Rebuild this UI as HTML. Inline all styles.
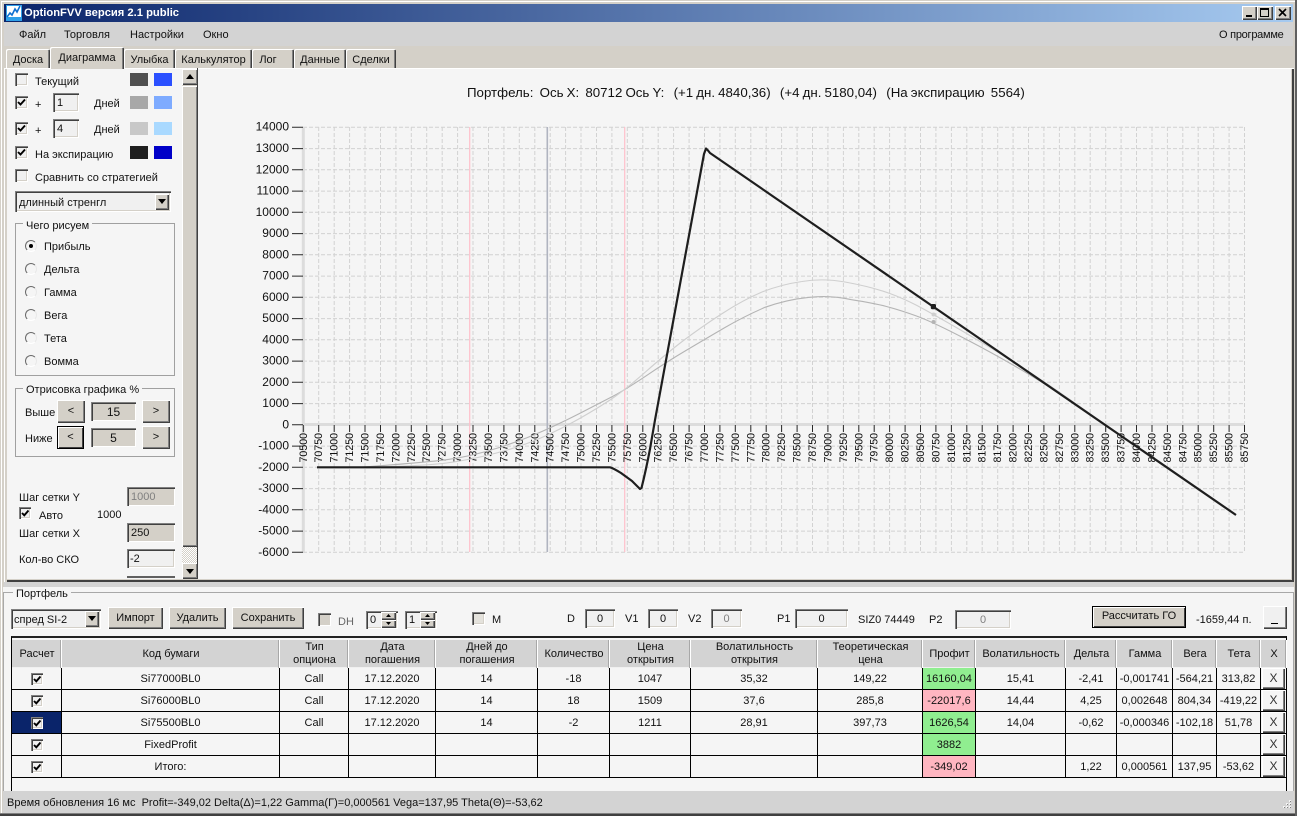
<!DOCTYPE html>
<html><head><meta charset="utf-8"><title>OptionFVV</title>
<style>
html,body{margin:0;padding:0}
body{width:1297px;height:816px;position:relative;overflow:hidden;background:#d4d0c8;font:11px "Liberation Sans",sans-serif;color:#111}
.a,.t,.r,.s,.cb,.rd,.in{position:absolute;box-sizing:border-box}
.t{white-space:pre;line-height:14px;height:14px;margin-top:1px}
.r{background:#d4d0c8;box-shadow:inset 1px 1px #fff,inset -1px -1px #404040,inset -2px -2px #808080;text-align:center}
.s{box-shadow:inset 1px 1px #808080,inset 2px 2px #404040,inset -1px -1px #fff,inset -2px -2px #d4d0c8;background:#f0f0f0}
.in{box-shadow:inset 1px 1px #808080,inset 2px 2px #404040,inset -1px -1px #fff,inset -2px -2px #d4d0c8;background:#f0f0f0;text-align:center;line-height:21px}
.cb{width:13px;height:13px;box-shadow:inset 1px 1px #808080,inset 2px 2px #404040,inset -1px -1px #fff,inset -2px -2px #d4d0c8;background:#f0f0f0}
.cb svg{position:absolute;left:0;top:0}
.rd{width:12px;height:12px;border-radius:50%;background:#f5f5f5;border:1.5px solid;border-color:#6a6a6a #e8e8e8 #fff #6a6a6a}
.tab{position:absolute;box-sizing:border-box;top:49px;height:19px;background:#d4d0c8;text-align:center;line-height:22px;font-size:11px;box-shadow:inset 1px 1px #fff,inset -1px 0 #404040,inset -2px 0 #808080;border-radius:2px 2px 0 0}
.gb{position:absolute;box-sizing:border-box;border:1px solid #a0a0a0}
.gt{position:absolute;background:#f5f5f5;padding:0 3px;line-height:13px;white-space:pre}
table{position:absolute;left:12px;top:640px;border-collapse:separate;border-spacing:0;table-layout:fixed;width:1275px;font-size:11px}
th{font-weight:normal;background:#d3d3d3;height:28px;padding:0;line-height:13px;box-shadow:inset -1px 0 #fff,inset -2px 0 #a8a8a8,inset 0 -1px #f0f0f0;text-align:center}
td{height:21px;padding:0;text-align:center;border-right:1px solid #000;border-bottom:1px solid #000;background:#f5f5f5;position:relative;white-space:nowrap}
td .cb{left:19px;top:5px;width:12px;height:12px}
td .r{left:1px;top:0;width:23px;height:21px;line-height:20px;font-size:12px;color:#333;position:absolute;background:#f5f5f5}
.g{background:#90ee90}.p{background:#ffb6c1}
.sel{background:#0a246a}
</style></head><body>
<!-- frame -->
<div class="a" style="left:0;top:0;width:1297px;height:816px;background:#d4d0c8;box-shadow:inset 1px 1px #d4d0c8,inset 2px 2px #fff,inset -1px -1px #404040,inset -2px -2px #808080"></div>
<!-- title bar -->
<div class="a" style="left:4px;top:4px;width:1289px;height:18px;background:linear-gradient(90deg,#0a246a,#a6caf0)"></div>
<svg class="a" style="left:6px;top:5px" width="16" height="16" viewBox="0 0 16 16"><rect width="16" height="16" fill="#2f9fe8"/><rect x="1" y="1" width="14" height="11" fill="#fff"/><path d="M1 12l3-4 2 2 3-6 2 3 3-6" fill="none" stroke="#1070d0" stroke-width="1.6"/></svg>
<div class="t" style="left:24px;top:5px;color:#fff;font-weight:bold;font-size:11.2px">OptionFVV версия 2.1 public</div>
<div class="r" style="left:1242px;top:6px;width:15px;height:14px"><div class="a" style="left:4px;top:9px;width:6px;height:2px;background:#000"></div></div>
<div class="r" style="left:1257px;top:6px;width:16px;height:14px"><div class="a" style="left:3px;top:2px;width:9px;height:9px;border:1px solid #000;border-top-width:2px;box-sizing:border-box"></div></div>
<div class="r" style="left:1275px;top:6px;width:16px;height:14px"><svg class="a" style="left:3px;top:2px" width="10" height="9"><path d="M1 1l7 7M8 1L1 8" stroke="#000" stroke-width="1.6"/></svg></div>
<!-- menu -->
<div class="a" style="left:4px;top:22px;width:1289px;height:24px;background:#d3d3d3"></div>
<div class="t" style="left:19px;top:27px">Файл</div>
<div class="t" style="left:64px;top:27px">Торговля</div>
<div class="t" style="left:130px;top:27px">Настройки</div>
<div class="t" style="left:203px;top:27px">Окно</div>
<div class="t" style="left:1219px;top:27px;letter-spacing:-0.25px">О программе</div>
<!-- tabs -->
<div class="tab" style="left:6px;width:44px">Доска</div>
<div class="tab" style="left:124px;width:51px">Улыбка</div>
<div class="tab" style="left:175px;width:77px">Калькулятор</div>
<div class="tab" style="left:252px;width:42px;padding-right:10px">Лог</div>
<div class="tab" style="left:294px;width:52px">Данные</div>
<div class="tab" style="left:346px;width:50px">Сделки</div>
<!-- main panel -->
<div class="a" style="left:4px;top:68px;width:1290px;height:514px;background:#f5f5f5;box-shadow:inset 1px 1px #fff,inset 3px 0 #d4d0c8,inset -1px -1px #404040,inset -2px -2px #404040,inset -3px -3px #d4d0c8,inset 0 1px #fff"></div>
<div class="tab" style="left:50px;top:47px;width:74px;height:22px;z-index:2;line-height:22px">Диаграмма</div>
<!-- left column -->
<div class="cb" style="left:15px;top:73px"></div>
<div class="t" style="left:35px;top:74px">Текущий</div>
<div class="a" style="left:130px;top:73px;width:18px;height:13px;background:#505050"></div>
<div class="a" style="left:154px;top:73px;width:18px;height:13px;background:#2b50ff"></div>

<div class="cb" style="left:15px;top:96px"><svg width="13" height="13"><path d="M3 6l2.5 2.5L10 3.5" fill="none" stroke="#000" stroke-width="1.9"/></svg></div>
<div class="t" style="left:35px;top:97px">+</div>
<div class="in" style="left:53px;top:93px;width:26px;height:19px;text-align:left;padding-left:4px">1</div>
<div class="t" style="left:94px;top:96px">Дней</div>
<div class="a" style="left:130px;top:96px;width:18px;height:13px;background:#a8a8a8"></div>
<div class="a" style="left:154px;top:96px;width:18px;height:13px;background:#7eabff"></div>

<div class="cb" style="left:15px;top:122px"><svg width="13" height="13"><path d="M3 6l2.5 2.5L10 3.5" fill="none" stroke="#000" stroke-width="1.9"/></svg></div>
<div class="t" style="left:35px;top:123px">+</div>
<div class="in" style="left:53px;top:119px;width:26px;height:19px;text-align:left;padding-left:4px">4</div>
<div class="t" style="left:94px;top:122px">Дней</div>
<div class="a" style="left:130px;top:122px;width:18px;height:13px;background:#c8c8c8"></div>
<div class="a" style="left:154px;top:122px;width:18px;height:13px;background:#a9d9ff"></div>

<div class="cb" style="left:15px;top:146px"><svg width="13" height="13"><path d="M3 6l2.5 2.5L10 3.5" fill="none" stroke="#000" stroke-width="1.9"/></svg></div>
<div class="t" style="left:35px;top:147px">На экспирацию</div>
<div class="a" style="left:130px;top:146px;width:18px;height:13px;background:#1e1e1e"></div>
<div class="a" style="left:154px;top:146px;width:18px;height:13px;background:#0000c8"></div>

<div class="cb" style="left:15px;top:169px"></div>
<div class="t" style="left:35px;top:170px">Сравнить со стратегией</div>

<div class="s" style="left:15px;top:191px;width:156px;height:21px"></div>
<div class="t" style="left:19px;top:195px">длинный стренгл</div>
<div class="r" style="left:155px;top:194px;width:14px;height:16px"><svg class="a" style="left:3px;top:5px" width="8" height="5"><path d="M0 0h8L4 5z" fill="#000"/></svg></div>

<!-- scrollbar -->
<div class="a" style="left:182px;top:69px;width:16px;height:510px;background:#d4d0c8"></div>
<div class="r" style="left:182px;top:69px;width:16px;height:16px"><svg class="a" style="left:4px;top:5px" width="8" height="5"><path d="M0 5h8L4 0z" fill="#000"/></svg></div>
<div class="r" style="left:182px;top:86px;width:16px;height:461px"></div>
<div class="a" style="left:182px;top:547px;width:16px;height:16px;background:repeating-conic-gradient(#fff 0 25%,#d4d0c8 0 50%) 0 0/2px 2px"></div>
<div class="r" style="left:182px;top:563px;width:16px;height:16px"><svg class="a" style="left:4px;top:6px" width="8" height="5"><path d="M0 0h8L4 5z" fill="#000"/></svg></div>
<div class="a" style="left:197px;top:68px;width:1px;height:511px;background:#404040"></div>

<!-- group 1 -->
<div class="gb" style="left:15px;top:223px;width:160px;height:153px"></div>
<div class="gt" style="left:23px;top:220px">Чего рисуем</div>
<div class="rd" style="left:25px;top:240px"><div class="a" style="left:3px;top:3px;width:4px;height:4px;border-radius:50%;background:#000"></div></div>
<div class="t" style="left:44px;top:239px">Прибыль</div>
<div class="rd" style="left:25px;top:263px"></div>
<div class="t" style="left:44px;top:262px">Дельта</div>
<div class="rd" style="left:25px;top:286px"></div>
<div class="t" style="left:44px;top:285px">Гамма</div>
<div class="rd" style="left:25px;top:309px"></div>
<div class="t" style="left:44px;top:308px">Вега</div>
<div class="rd" style="left:25px;top:332px"></div>
<div class="t" style="left:44px;top:331px">Тета</div>
<div class="rd" style="left:25px;top:355px"></div>
<div class="t" style="left:44px;top:354px">Вомма</div>

<!-- group 2 -->
<div class="gb" style="left:15px;top:388px;width:160px;height:69px"></div>
<div class="gt" style="left:23px;top:384px">Отрисовка графика %</div>
<div class="t" style="left:25px;top:405px">Выше</div>
<div class="r" style="left:57px;top:400px;width:28px;height:23px;line-height:23px">&lt;</div>
<div class="s" style="left:91px;top:402px;width:45px;height:19px;background:#d4d0c8;text-align:center;line-height:20px;font-size:12px">15</div>
<div class="r" style="left:142px;top:400px;width:28px;height:23px;line-height:23px">&gt;</div>
<div class="t" style="left:25px;top:431px">Ниже</div>
<div class="r" style="left:57px;top:426px;width:27px;height:23px;line-height:23px;box-shadow:inset 0 0 0 1px #000,inset 2px 2px #fff,inset -2px -2px #404040">&lt;</div>
<div class="s" style="left:91px;top:428px;width:45px;height:19px;background:#d4d0c8;text-align:center;line-height:20px;font-size:12px">5</div>
<div class="r" style="left:142px;top:426px;width:28px;height:23px;line-height:23px">&gt;</div>

<div class="t" style="left:19px;top:490px">Шаг сетки Y</div>
<div class="in" style="left:127px;top:487px;width:48px;height:19px;background:#d4d0c8;color:#808080;text-align:left;padding-left:4px">1000</div>
<div class="cb" style="left:19px;top:507px;width:12px;height:12px"><svg width="12" height="12"><path d="M3 6l2.3 2.3L9.5 3.5" fill="none" stroke="#000" stroke-width="1.9"/></svg></div>
<div class="t" style="left:39px;top:508px">Авто</div>
<div class="t" style="left:97px;top:507px">1000</div>
<div class="t" style="left:19px;top:526px">Шаг сетки X</div>
<div class="in" style="left:127px;top:523px;width:48px;height:19px;background:#d4d0c8;text-align:left;padding-left:4px">250</div>
<div class="t" style="left:19px;top:552px">Кол-во СКО</div>
<div class="in" style="left:127px;top:549px;width:48px;height:19px;text-align:left;padding-left:3px">-2</div>
<div class="a" style="left:127px;top:576px;width:48px;height:2px;background:#606060"></div>

<!-- chart -->
<div class="t" style="left:467px;top:85px;font-size:13.3px;word-spacing:-0.6px">Портфель:  Ось X:  80712 Ось Y:   (+1 дн. 4840,36)   (+4 дн. 5180,04)   (На экспирацию  5564)</div>
<svg class="a" style="left:0;top:0" width="1297" height="816" viewBox="0 0 1297 816" font-family="'Liberation Sans',sans-serif">
<path fill="none" stroke="#d2d2d2" stroke-dasharray="4 2" d="M318.7 127V552M334.2 127V552M349.6 127V552M365 127V552M380.5 127V552M395.9 127V552M411.3 127V552M426.7 127V552M442.2 127V552M457.6 127V552M473 127V552M488.5 127V552M503.9 127V552M519.3 127V552M534.8 127V552M550.2 127V552M565.6 127V552M581 127V552M596.5 127V552M611.9 127V552M627.3 127V552M642.8 127V552M658.2 127V552M673.6 127V552M689.1 127V552M704.5 127V552M719.9 127V552M735.3 127V552M750.8 127V552M766.2 127V552M781.6 127V552M797.1 127V552M812.5 127V552M827.9 127V552M843.4 127V552M858.8 127V552M874.2 127V552M889.6 127V552M905.1 127V552M920.5 127V552M935.9 127V552M951.4 127V552M966.8 127V552M982.2 127V552M997.7 127V552M1013.1 127V552M1028.5 127V552M1043.9 127V552M1059.4 127V552M1074.8 127V552M1090.2 127V552M1105.7 127V552M1121.1 127V552M1136.5 127V552M1152 127V552M1167.4 127V552M1182.8 127V552M1198.2 127V552M1213.7 127V552M1229.1 127V552M1244.5 127V552M303 127.3H1245M303 148.6H1245M303 169.8H1245M303 191.1H1245M303 212.3H1245M303 233.6H1245M303 254.8H1245M303 276.1H1245M303 297.3H1245M303 318.6H1245M303 339.8H1245M303 361.1H1245M303 382.3H1245M303 403.6H1245M303 446.1H1245M303 467.3H1245M303 488.6H1245M303 509.8H1245M303 531.1H1245M303 552.3H1245"/>
<path d="M303.3 127V552" stroke="#dcdcdc" stroke-width="3" fill="none"/>
<path d="M303 424.5H1245" stroke="#dcdcdc" stroke-width="3" fill="none"/>
<path d="M469.7 127V552M624.7 127V552" stroke="#ffc0cb" stroke-width="1.2" fill="none"/>
<path d="M547.3 127V552" stroke="#b0b4c0" stroke-width="1.6" fill="none"/>
<path fill="none" stroke="#292929" d="M292 127.3H303M292 148.6H303M292 169.8H303M292 191.1H303M292 212.3H303M292 233.6H303M292 254.8H303M292 276.1H303M292 297.3H303M292 318.6H303M292 339.8H303M292 361.1H303M292 382.3H303M292 403.6H303M292 424.8H303M292 446.1H303M292 467.3H303M292 488.6H303M292 509.8H303M292 531.1H303M292 552.3H303M303.3 425V432M318.7 425V432M334.2 425V432M349.6 425V432M365 425V432M380.5 425V432M395.9 425V432M411.3 425V432M426.7 425V432M442.2 425V432M457.6 425V432M473 425V432M488.5 425V432M503.9 425V432M519.3 425V432M534.8 425V432M550.2 425V432M565.6 425V432M581 425V432M596.5 425V432M611.9 425V432M627.3 425V432M642.8 425V432M658.2 425V432M673.6 425V432M689.1 425V432M704.5 425V432M719.9 425V432M735.3 425V432M750.8 425V432M766.2 425V432M781.6 425V432M797.1 425V432M812.5 425V432M827.9 425V432M843.4 425V432M858.8 425V432M874.2 425V432M889.6 425V432M905.1 425V432M920.5 425V432M935.9 425V432M951.4 425V432M966.8 425V432M982.2 425V432M997.7 425V432M1013.1 425V432M1028.5 425V432M1043.9 425V432M1059.4 425V432M1074.8 425V432M1090.2 425V432M1105.7 425V432M1121.1 425V432M1136.5 425V432M1152 425V432M1167.4 425V432M1182.8 425V432M1198.2 425V432M1213.7 425V432M1229.1 425V432M1244.5 425V432"/>
<g font-size="12" text-anchor="end" fill="#111" transform="translate(0,-0.5)">
<text x="289" y="131">14000</text><text x="289" y="152.5">13000</text><text x="289" y="174">12000</text><text x="289" y="195">11000</text><text x="289" y="216.5">10000</text><text x="289" y="237.5">9000</text><text x="289" y="259">8000</text><text x="289" y="280">7000</text><text x="289" y="301.5">6000</text><text x="289" y="322.5">5000</text><text x="289" y="344">4000</text><text x="289" y="365">3000</text><text x="289" y="386.5">2000</text><text x="289" y="407.5">1000</text><text x="289" y="429">0</text><text x="289" y="450">-1000</text><text x="289" y="471.5">-2000</text><text x="289" y="492.5">-3000</text><text x="289" y="514">-4000</text><text x="289" y="535">-5000</text><text x="289" y="556.5">-6000</text>
</g>
<g font-size="10.6" text-anchor="end" fill="#111">
<text transform="translate(307,433) rotate(-90)">70500</text><text transform="translate(322.2,433) rotate(-90)">70750</text><text transform="translate(337.7,433) rotate(-90)">71000</text><text transform="translate(353.1,433) rotate(-90)">71250</text><text transform="translate(368.5,433) rotate(-90)">71500</text><text transform="translate(384,433) rotate(-90)">71750</text><text transform="translate(399.4,433) rotate(-90)">72000</text><text transform="translate(414.8,433) rotate(-90)">72250</text><text transform="translate(430.2,433) rotate(-90)">72500</text><text transform="translate(445.7,433) rotate(-90)">72750</text><text transform="translate(461.1,433) rotate(-90)">73000</text><text transform="translate(476.5,433) rotate(-90)">73250</text><text transform="translate(492,433) rotate(-90)">73500</text><text transform="translate(507.4,433) rotate(-90)">73750</text><text transform="translate(522.8,433) rotate(-90)">74000</text><text transform="translate(538.3,433) rotate(-90)">74250</text><text transform="translate(553.7,433) rotate(-90)">74500</text><text transform="translate(569.1,433) rotate(-90)">74750</text><text transform="translate(584.5,433) rotate(-90)">75000</text><text transform="translate(600,433) rotate(-90)">75250</text><text transform="translate(615.4,433) rotate(-90)">75500</text><text transform="translate(630.8,433) rotate(-90)">75750</text><text transform="translate(646.3,433) rotate(-90)">76000</text><text transform="translate(661.7,433) rotate(-90)">76250</text><text transform="translate(677.1,433) rotate(-90)">76500</text><text transform="translate(692.6,433) rotate(-90)">76750</text><text transform="translate(708,433) rotate(-90)">77000</text><text transform="translate(723.4,433) rotate(-90)">77250</text><text transform="translate(738.8,433) rotate(-90)">77500</text><text transform="translate(754.3,433) rotate(-90)">77750</text><text transform="translate(769.7,433) rotate(-90)">78000</text><text transform="translate(785.1,433) rotate(-90)">78250</text><text transform="translate(800.6,433) rotate(-90)">78500</text><text transform="translate(816,433) rotate(-90)">78750</text><text transform="translate(831.4,433) rotate(-90)">79000</text><text transform="translate(846.9,433) rotate(-90)">79250</text><text transform="translate(862.3,433) rotate(-90)">79500</text><text transform="translate(877.7,433) rotate(-90)">79750</text><text transform="translate(893.1,433) rotate(-90)">80000</text><text transform="translate(908.6,433) rotate(-90)">80250</text><text transform="translate(924,433) rotate(-90)">80500</text><text transform="translate(939.4,433) rotate(-90)">80750</text><text transform="translate(954.9,433) rotate(-90)">81000</text><text transform="translate(970.3,433) rotate(-90)">81250</text><text transform="translate(985.7,433) rotate(-90)">81500</text><text transform="translate(1001.2,433) rotate(-90)">81750</text><text transform="translate(1016.6,433) rotate(-90)">82000</text><text transform="translate(1032,433) rotate(-90)">82250</text><text transform="translate(1047.4,433) rotate(-90)">82500</text><text transform="translate(1062.9,433) rotate(-90)">82750</text><text transform="translate(1078.3,433) rotate(-90)">83000</text><text transform="translate(1093.7,433) rotate(-90)">83250</text><text transform="translate(1109.2,433) rotate(-90)">83500</text><text transform="translate(1124.6,433) rotate(-90)">83750</text><text transform="translate(1140,433) rotate(-90)">84000</text><text transform="translate(1155.5,433) rotate(-90)">84250</text><text transform="translate(1170.9,433) rotate(-90)">84500</text><text transform="translate(1186.3,433) rotate(-90)">84750</text><text transform="translate(1201.7,433) rotate(-90)">85000</text><text transform="translate(1217.2,433) rotate(-90)">85250</text><text transform="translate(1232.6,433) rotate(-90)">85500</text><text transform="translate(1248,433) rotate(-90)">85750</text>
</g>
<path fill="none" stroke="#b4b4b4" stroke-width="1.1" d="M363 467 Q423 462.7 446.5 459.7 Q470 456.7 496.5 448.4 Q523 440 543 431 Q563 422 580.5 413 Q598 404 611.5 397 Q625 390 646 375.9 Q667 361.7 687 349.9 Q707 338 725 327.5 Q743 317 765 307.3 Q787 299.5 808.5 297.4 Q830 295 851.5 299.7 Q873 303 886.5 306.5 Q900 310 916.5 316 Q933 322 966.5 339.5 Q1000 357 1030 375 Q1060 393 1110 428"/>
<path fill="none" stroke="#cfcfcf" stroke-width="1.1" d="M363 467.3 Q423 466 446.5 463 Q470 460 496.5 453 Q523 446 543 437 Q563 428 580.5 418 Q598 408 611.5 399 Q625 390 646 371.5 Q667 353 683.5 340.5 Q700 328 721.5 314 Q743 300 762 292 Q781 284.5 802 281.5 Q823 278 845 282 Q867 286 883.5 291.3 Q900 296.7 916.5 305.3 Q933 314 966.5 333.5 Q1000 353 1030 372.5 Q1060 392 1110 428"/>
<path fill="none" stroke="#1e1e1e" stroke-width="2.2" stroke-linejoin="round" d="M317 467.3H610Q613 468 621 473L632 481L640 489L641.5 488Q646 470 650 449L655 420L704 154L706 148.5L708 150.5L710 153L1236 515"/>
<rect x="930.8" y="304" width="5.2" height="5.2" rx="1.5" fill="#1e1e1e"/>
<circle cx="933.5" cy="322" r="2" fill="#b4b4b4"/><circle cx="933.5" cy="314.5" r="2" fill="#cfcfcf"/>
</svg>

<!-- splitter -->
<div class="a" style="left:4px;top:582px;width:1289px;height:5px;background:#d3d3d3"></div>
<!-- bottom panel -->
<div class="a" style="left:3px;top:587px;width:1291px;height:204px;background:#f5f5f5"></div>
<div class="a" style="left:3px;top:592px;width:1291px;height:199px;border:1px solid #a8a8a8;border-bottom:0;box-sizing:border-box"></div>
<div class="gt" style="left:13px;top:588px">Портфель</div>

<div class="s" style="left:11px;top:609px;width:90px;height:20px"></div>
<div class="t" style="left:14px;top:612px">спред SI-2</div>
<div class="r" style="left:85px;top:611px;width:14px;height:16px"><svg class="a" style="left:3px;top:5px" width="8" height="5"><path d="M0 0h8L4 5z" fill="#000"/></svg></div>
<div class="r" style="left:108px;top:607px;width:55px;height:22px;line-height:22px">Импорт</div>
<div class="r" style="left:169px;top:607px;width:57px;height:22px;line-height:22px">Удалить</div>
<div class="r" style="left:232px;top:607px;width:72px;height:22px;line-height:22px">Сохранить</div>
<div class="cb" style="left:318px;top:613px;background:#d4d0c8"></div>
<div class="t" style="left:338px;top:614px;color:#666">DH</div>
<div class="s" style="left:366px;top:611px;width:32px;height:18px;padding-left:4px;line-height:19px">0</div>
<div class="r" style="left:381px;top:612px;width:15px;height:8px"><svg class="a" style="left:5px;top:2px" width="5" height="3"><path d="M0 3h5L2.5 0z" fill="#000"/></svg></div>
<div class="r" style="left:381px;top:620px;width:15px;height:8px"><svg class="a" style="left:5px;top:2px" width="5" height="3"><path d="M0 0h5L2.5 3z" fill="#000"/></svg></div>
<div class="s" style="left:405px;top:611px;width:32px;height:18px;padding-left:4px;line-height:19px">1</div>
<div class="r" style="left:420px;top:612px;width:15px;height:8px"><svg class="a" style="left:5px;top:2px" width="5" height="3"><path d="M0 3h5L2.5 0z" fill="#000"/></svg></div>
<div class="r" style="left:420px;top:620px;width:15px;height:8px"><svg class="a" style="left:5px;top:2px" width="5" height="3"><path d="M0 0h5L2.5 3z" fill="#000"/></svg></div>
<div class="cb" style="left:472px;top:612px;background:#e4e2dc"></div>
<div class="t" style="left:492px;top:612px">M</div>
<div class="t" style="left:567px;top:611px">D</div>
<div class="in" style="left:585px;top:609px;width:30px;height:19px">0</div>
<div class="t" style="left:625px;top:611px">V1</div>
<div class="in" style="left:648px;top:609px;width:30px;height:19px">0</div>
<div class="t" style="left:688px;top:611px">V2</div>
<div class="in" style="left:711px;top:609px;width:31px;height:19px;color:#808080">0</div>
<div class="t" style="left:777px;top:611px">P1</div>
<div class="in" style="left:795px;top:609px;width:53px;height:19px">0</div>
<div class="t" style="left:858px;top:612px">SIZ0 74449</div>
<div class="t" style="left:929px;top:612px">P2</div>
<div class="in" style="left:955px;top:610px;width:56px;height:19px;color:#808080">0</div>
<div class="r" style="left:1092px;top:606px;width:94px;height:22px;line-height:21px;box-shadow:inset 0 0 0 1px #000,inset 2px 2px #fff,inset -2px -2px #404040">Рассчитать ГО</div>
<div class="t" style="left:1196px;top:612px">-1659,44 п.</div>
<div class="r" style="left:1263px;top:606px;width:24px;height:23px;background:#f0f0f0"><div class="a" style="left:8px;top:17px;width:7px;height:1px;background:#000"></div></div>

<!-- table frame -->
<div class="a" style="left:11px;top:636px;width:1276px;height:155px;background:#f5f5f5;box-sizing:border-box;border:1px solid #000;border-top:2px solid #222;border-bottom:0"></div>
<table>
<colgroup><col style="width:50px"><col style="width:218px"><col style="width:69px"><col style="width:87px"><col style="width:102px"><col style="width:72px"><col style="width:81px"><col style="width:127px"><col style="width:105px"><col style="width:53px"><col style="width:90px"><col style="width:51px"><col style="width:56px"><col style="width:44px"><col style="width:44px"><col style="width:26px"></colgroup>
<tr><th>Расчет</th><th>Код бумаги</th><th>Тип<br>опциона</th><th>Дата<br>погашения</th><th>Дней до<br>погашения</th><th>Количество</th><th>Цена<br>открытия</th><th>Волатильность<br>открытия</th><th>Теоретическая<br>цена</th><th>Профит</th><th>Волатильность</th><th>Дельта</th><th>Гамма</th><th>Вега</th><th>Тета</th><th>X</th></tr>
<tr><td><div class="cb"><svg width="12" height="12"><path d="M3 6l2.3 2.3L9.5 3.5" fill="none" stroke="#000" stroke-width="1.9"/></svg></div></td><td>Si77000BL0</td><td>Call</td><td>17.12.2020</td><td>14</td><td>-18</td><td>1047</td><td>35,32</td><td>149,22</td><td class="g">16160,04</td><td>15,41</td><td>-2,41</td><td>-0,001741</td><td>-564,21</td><td>313,82</td><td><div class="r">X</div></td></tr>
<tr><td><div class="cb"><svg width="12" height="12"><path d="M3 6l2.3 2.3L9.5 3.5" fill="none" stroke="#000" stroke-width="1.9"/></svg></div></td><td>Si76000BL0</td><td>Call</td><td>17.12.2020</td><td>14</td><td>18</td><td>1509</td><td>37,6</td><td>285,8</td><td class="p">-22017,6</td><td>14,44</td><td>4,25</td><td>0,002648</td><td>804,34</td><td>-419,22</td><td><div class="r">X</div></td></tr>
<tr><td class="sel"><div class="cb"><svg width="12" height="12"><path d="M3 6l2.3 2.3L9.5 3.5" fill="none" stroke="#000" stroke-width="1.9"/></svg></div></td><td>Si75500BL0</td><td>Call</td><td>17.12.2020</td><td>14</td><td>-2</td><td>1211</td><td>28,91</td><td>397,73</td><td class="g">1626,54</td><td>14,04</td><td>-0,62</td><td>-0,000346</td><td>-102,18</td><td>51,78</td><td><div class="r">X</div></td></tr>
<tr><td><div class="cb"><svg width="12" height="12"><path d="M3 6l2.3 2.3L9.5 3.5" fill="none" stroke="#000" stroke-width="1.9"/></svg></div></td><td>FixedProfit</td><td></td><td></td><td></td><td></td><td></td><td></td><td></td><td class="g">3882</td><td></td><td></td><td></td><td></td><td></td><td><div class="r">X</div></td></tr>
<tr><td><div class="cb"><svg width="12" height="12"><path d="M3 6l2.3 2.3L9.5 3.5" fill="none" stroke="#000" stroke-width="1.9"/></svg></div></td><td>Итого:</td><td></td><td></td><td></td><td></td><td></td><td></td><td></td><td class="p">-349,02</td><td></td><td>1,22</td><td>0,000561</td><td>137,95</td><td>-53,62</td><td><div class="r">X</div></td></tr>
</table>

<!-- status bar -->
<div class="a" style="left:3px;top:791px;width:1291px;height:22px;background:#d3d3d3"></div>
<div class="t" style="left:7px;top:795px;font-size:11px">Время обновления 16 мс  Profit=-349,02 Delta(Δ)=1,22 Gamma(Γ)=0,000561 Vega=137,95 Theta(Θ)=-53,62</div>
<svg class="a" style="left:1280px;top:798px" width="13" height="13"><path d="M9 2h2v2H9zM6 5h2v2H6zM9 5h2v2H9zM3 8h2v2H3zM6 8h2v2H6zM9 8h2v2H9z" fill="#f4f4f4"/><path d="M10 3h1v1h-1zM7 6h1v1H7zM10 6h1v1h-1zM4 9h1v1H4zM7 9h1v1H7zM10 9h1v1h-1z" fill="#808080"/></svg>
<div class="a" style="left:0;top:813px;width:1297px;height:1px;background:#808080"></div>
<div class="a" style="left:0;top:814px;width:1297px;height:2px;background:#404040"></div>
<div class="a" style="left:1295px;top:0;width:2px;height:816px;background:#606060"></div>
</body></html>
